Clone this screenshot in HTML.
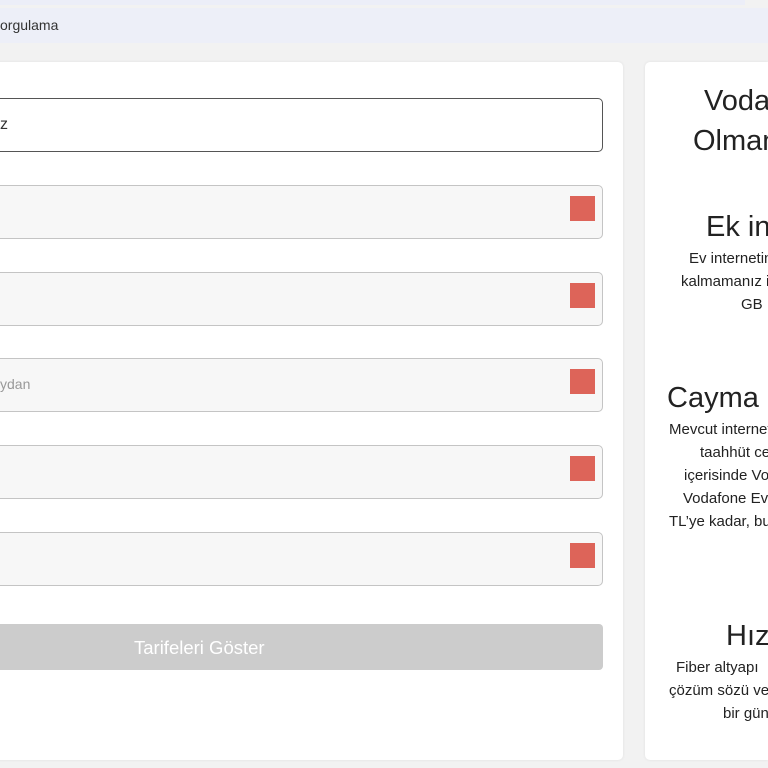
<!DOCTYPE html>
<html style="overflow:hidden"><head><meta charset="utf-8"><style>
body{margin:0;width:768px;height:768px;overflow:hidden;background:#f2f2f2;font-family:"Liberation Sans",Arial,sans-serif;position:relative}
.a{position:absolute;white-space:nowrap}
.f{position:absolute;left:-10px;width:611px;height:52px;border:1px solid #c4c4c4;border-radius:5px;background:#f7f7f7}
.sq{position:absolute;left:570px;width:25px;height:25px;background:#dd6459}
.h{font-size:29px;color:#222}
.t{font-size:15px;color:#222}
.clip{position:absolute;left:0;top:0;width:768px;height:768px;overflow:hidden}
</style></head><body><div class="clip">
<div class="a" style="left:0;top:0;width:745px;height:5px;background:#eceef8"></div>
<div class="a" style="left:0;top:8px;width:768px;height:35px;background:#edeff8"></div>
<div class="a" style="left:0;top:17px;font-size:14px;color:#333">orgulama</div>
<div class="a" style="left:-10px;top:62px;width:633px;height:698px;background:#fff;border-radius:5px;box-shadow:0 0 3px rgba(0,0,0,.08)"></div>
<div class="a" style="left:645px;top:62px;width:123px;height:698px;background:#fff;border-radius:5px 0 0 5px;box-shadow:0 0 3px rgba(0,0,0,.08)"></div>
<div class="f" style="top:98px;background:#fff;border-color:#555"></div>
<div class="a" style="left:0;top:116px;font-size:16px;color:#333">z</div>
<div class="f" style="top:185px"></div><div class="sq" style="top:196px"></div>
<div class="f" style="top:272px"></div><div class="sq" style="top:283px"></div>
<div class="f" style="top:358px"></div><div class="sq" style="top:369px"></div>
<div class="a" style="left:0;top:376px;font-size:14px;color:#999">ydan</div>
<div class="f" style="top:445px"></div><div class="sq" style="top:456px"></div>
<div class="f" style="top:532px"></div><div class="sq" style="top:543px"></div>
<div class="a" style="left:-10px;top:624px;width:613px;height:46px;background:#cccccc;border-radius:4px"></div>
<div class="a" style="left:134px;top:637px;font-size:18.5px;color:#fff">Tarifeleri Göster</div>
<div class="a h" style="left:704px;top:85px">Vodafone</div>
<div class="a h" style="left:693px;top:125px">Olmanın</div>
<div class="a h" style="left:706px;top:211px">Ek internet</div>
<div class="a t" style="left:689px;top:250px">Ev internetiniz</div>
<div class="a t" style="left:681px;top:273px">kalmamanız için</div>
<div class="a t" style="left:741px;top:296px">GB</div>
<div class="a h" style="left:667px;top:382px">Cayma bedeli</div>
<div class="a t" style="left:669px;top:421px">Mevcut internet</div>
<div class="a t" style="left:700px;top:444px">taahhüt cezası</div>
<div class="a t" style="left:684px;top:467px">içerisinde Vodafone</div>
<div class="a t" style="left:683px;top:490px">Vodafone Ev</div>
<div class="a t" style="left:669px;top:513px">TL’ye kadar, bu</div>
<div class="a h" style="left:726px;top:620px">Hızlı</div>
<div class="a t" style="left:676px;top:659px">Fiber altyapı</div>
<div class="a t" style="left:669px;top:682px">çözüm sözü veriyoruz</div>
<div class="a t" style="left:723px;top:705px">bir gün</div>
</div></body></html>
